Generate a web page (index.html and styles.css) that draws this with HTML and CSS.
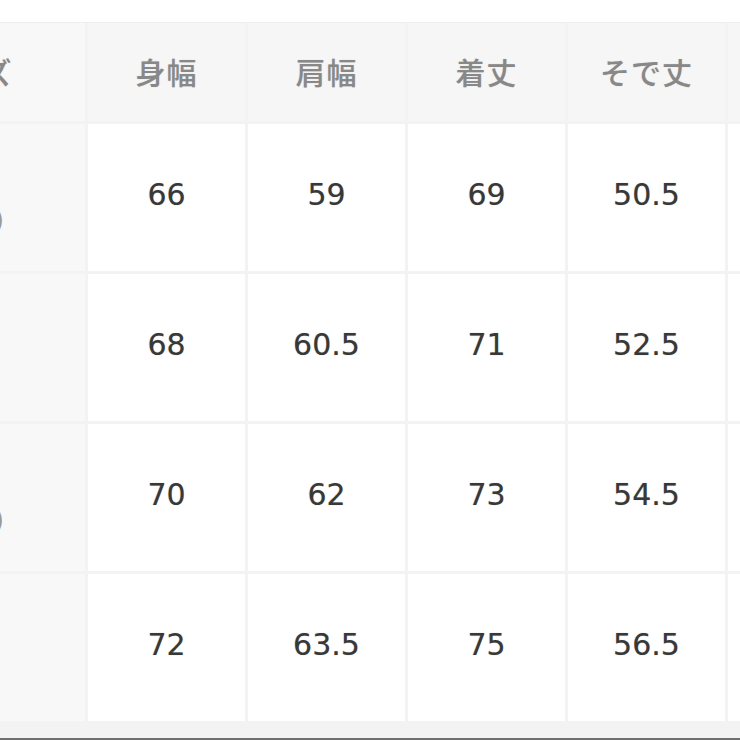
FILE: index.html
```html
<!DOCTYPE html>
<html lang="ja">
<head>
<meta charset="utf-8">
<title>サイズ表</title>
<link rel="stylesheet" href="styles.css">
</head>
<body>
<div class="sheet">
  <div class="table">
    <div class="cell head label">サイズ</div>
    <div class="cell head">身幅</div>
    <div class="cell head">肩幅</div>
    <div class="cell head">着丈</div>
    <div class="cell head">そで丈</div>
    <div class="cell head"></div>

    <div class="cell label two">S<br>(100)</div>
    <div class="cell num">66</div>
    <div class="cell num">59</div>
    <div class="cell num">69</div>
    <div class="cell num">50.5</div>
    <div class="cell num"></div>

    <div class="cell label">M</div>
    <div class="cell num">68</div>
    <div class="cell num">60.5</div>
    <div class="cell num">71</div>
    <div class="cell num">52.5</div>
    <div class="cell num"></div>

    <div class="cell label two">L<br>(110)</div>
    <div class="cell num">70</div>
    <div class="cell num">62</div>
    <div class="cell num">73</div>
    <div class="cell num">54.5</div>
    <div class="cell num"></div>

    <div class="cell label">XL</div>
    <div class="cell num">72</div>
    <div class="cell num">63.5</div>
    <div class="cell num">75</div>
    <div class="cell num">56.5</div>
    <div class="cell num"></div>
  </div>
</div>
</body>
</html>
```

FILE: styles.css
```css
html, body {
  margin: 0;
  padding: 0;
  background: #ffffff;
  overflow: hidden;
}

body {
  width: 740px;
  height: 740px;
}

.sheet {
  padding-top: 22px;
  width: 740px;
  overflow: hidden;
}

.table {
  margin-left: -152px;
  width: 1050px;
  display: grid;
  grid-template-columns: 237px 157px 157px 157px 157px 157px;
  grid-template-rows: 98px 147px 147px 147px 147px;
  column-gap: 3px;
  row-gap: 3px;
  background: #f3f3f3;
  border-top: 1px solid #ededed;
  padding-bottom: 19px;
  border-bottom: 2px solid #6f6f6f;
  box-sizing: border-box;
  height: 718px;
}

.cell {
  display: flex;
  align-items: center;
  justify-content: center;
  text-align: center;
}

.head {
  background: #f6f6f6;
  color: #888888;
  font-family: "Noto Sans CJK JP", "Noto Sans", sans-serif;
  font-size: 30px;
  font-weight: 500;
  letter-spacing: 1px;
  padding-bottom: 2px;
  text-shadow: 0 0 1px rgba(120, 120, 120, 0.35);
}

.label {
  background: #f8f8f8;
  color: #9a9a9a;
  font-family: "DejaVu Sans", "Noto Sans CJK JP", sans-serif;
  font-size: 28px;
  line-height: 38px;
}

.head.label {
  font-family: "Noto Sans CJK JP", sans-serif;
  font-size: 30px;
  color: #888888;
}

.two {
  padding-top: 8px;
}

.num {
  background: #ffffff;
  color: #383838;
  font-family: "DejaVu Sans", "Verdana", sans-serif;
  font-size: 30px;
  padding-bottom: 6px;
  text-shadow: 0 0 1px rgba(40, 40, 40, 0.4);
}
```
